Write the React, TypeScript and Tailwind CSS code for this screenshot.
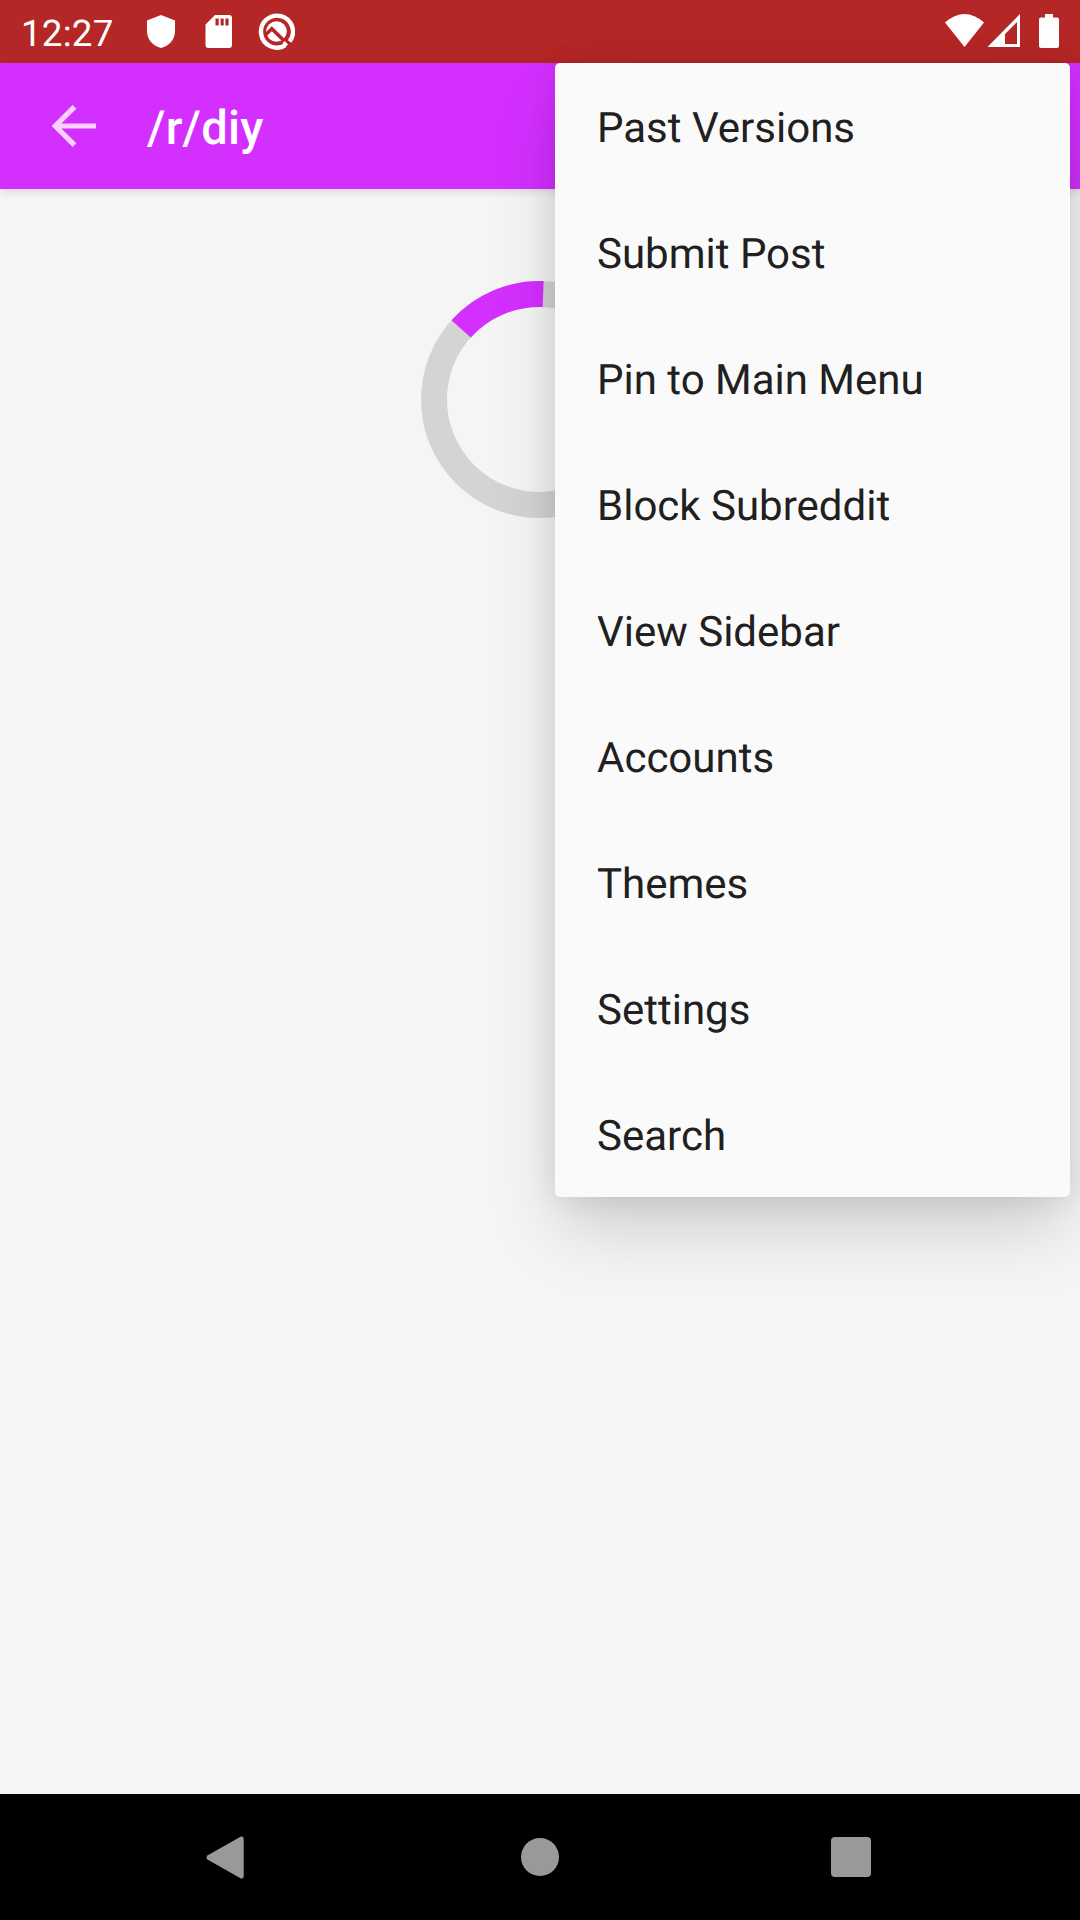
import React from "react";

const menuItems = [
  "Past Versions",
  "Submit Post",
  "Pin to Main Menu",
  "Block Subreddit",
  "View Sidebar",
  "Accounts",
  "Themes",
  "Settings",
  "Search",
];

function StatusBar() {
  return (
    <header className="flex h-[63px] items-start bg-[#b52626] pl-[21px] text-white">
      <span className="mt-3 w-[126px] text-[36.75px] leading-[43px] tracking-[0.2px]">12:27</span>
      <svg className="mt-[15px] h-[33px] w-7" viewBox="0 0 28 33" fill="currentColor">
        <path d="M14 0L28 5.6V16C28 24.500 22 31.200 14 33C6 31.200 0 24.500 0 16V5.600Z" />
      </svg>
      <svg className="ml-[30px] mt-[15px] h-[33px] w-[27px]" viewBox="0 0 27 33" fill="currentColor">
        <path
          fillRule="evenodd"
          d="M10 0H24Q27 0 27 3V30Q27 33 24 33H3.500Q.5 33 .5 30V9.500ZM10.500 3.500V10.500H13.700V3.500ZM15.600 3.500V10.500H18.700V3.500ZM20.400 3.500V10.500H23.600V3.500Z"
        />
      </svg>
      <svg className="ml-[26px] mt-[13px] h-[37px] w-[37px]" viewBox="0 0 37 37" fill="none">
        <path d="M31.600 28.500A16 16 0 1 0 27.200 32.400" stroke="currentColor" strokeWidth="4.400" />
        <circle cx="18.500" cy="18.500" r="10.300" fill="currentColor" />
        <path d="M8 21.500L13.800 15.700L30 31.500" stroke="#b52626" strokeWidth="3.400" />
        <path d="M25.500 29L29 32.500" stroke="currentColor" strokeWidth="3" />
      </svg>
      <div className="ml-auto mr-[21px] mt-[14px] flex">
        <svg className="h-[34px] w-[39px]" viewBox="0 0 39 34" fill="currentColor">
          <path d="M0 8.500Q19.500 -8.500 39 8.500L19.500 33Z" />
        </svg>
        <svg className="ml-[3px] h-[34px] w-[33px]" viewBox="0 0 33 34" fill="currentColor">
          <path fillRule="evenodd" d="M33 0V33H.5ZM30 8L18 20V30H30Z" />
        </svg>
        <svg className="ml-[19px] h-[34px] w-5" viewBox="0 0 20 34" fill="currentColor">
          <path d="M6 0H14V3.500H18Q20 3.500 20 5.500V32Q20 34 18 34H2Q0 34 0 32V5.500Q0 3.500 2 3.500H6Z" />
        </svg>
      </div>
    </header>
  );
}

function AppBar() {
  return (
    <div className="relative flex h-[126px] items-center bg-[#d32fff] pl-[51px] text-white shadow-[0_3px_8px_rgba(0,0,0,0.11)]">
      <svg className="mb-px h-[42px] w-[45px]" viewBox="0 0 45 42" fill="none" stroke="#f9d0ff" strokeWidth="5.200">
        <path d="M23.500 1.800L4.300 21L23.500 40.200M4.300 21H45" />
      </svg>
      <h1 className="ml-[51px] mt-[3px] text-[47.250px] font-medium leading-[56px] tracking-[0.2px]">/r/diy</h1>
    </div>
  );
}

function Spinner() {
  return (
    <svg className="h-[238px] w-[238px]" viewBox="-118.5 -119.5 238 238" fill="none" strokeWidth="26">
      <circle r="105.500" stroke="#d4d4d4" />
      <path d="M-78.400 -70.590A105.500 105.500 0 0 1 3.680 -105.440" stroke="#d32fff" />
    </svg>
  );
}

function OverflowMenu() {
  return (
    <ul className="absolute right-[10px] top-[63px] w-[515px] rounded-[5px] bg-[#fafafa] shadow-[0_35px_66px_-6px_rgba(0,0,0,0.17),0_2px_28px_rgba(0,0,0,0.09)]">
      {menuItems.map((item) => (
        <li key={item} className="flex h-[126px] items-center pl-[42px] pt-1 text-[42px] leading-[49px] text-[#202020]">
          {item}
        </li>
      ))}
    </ul>
  );
}

function NavigationBar() {
  return (
    <nav className="flex h-[126px] items-center bg-black pl-[206px] pr-[209px] text-[#999999]">
      <svg className="h-[43px] w-[38px]" viewBox="0 0 38 43" fill="currentColor">
        <path d="M1.800 19.200L34.500 .8Q37.700 -.5 37.700 3V40Q37.700 43.500 34.500 42.200L1.800 23.800Q-.8 21.500 1.800 19.200Z" />
      </svg>
      <span className="ml-[277px] h-[38px] w-[38px] rounded-full bg-current" />
      <span className="ml-auto h-10 w-10 rounded-[4px] bg-current" />
    </nav>
  );
}

export default function App() {
  return (
    <div className="relative flex h-[1920px] w-[1080px] flex-col overflow-hidden bg-[#f5f5f5] font-['Roboto',sans-serif] [text-rendering:geometricPrecision]">
      <StatusBar />
      <AppBar />
      <main className="flex flex-1 justify-center pt-[91px]">
        <Spinner />
      </main>
      <NavigationBar />
      <OverflowMenu />
    </div>
  );
}
